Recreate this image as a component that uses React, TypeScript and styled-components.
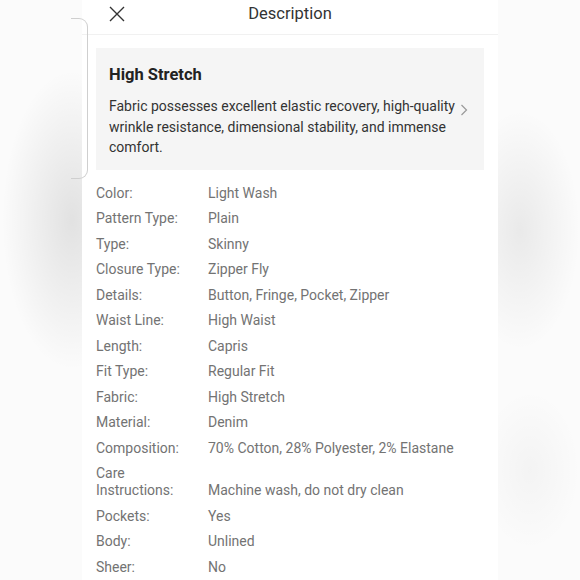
import React from "react";
import styled, { createGlobalStyle } from "styled-components";

const Global = createGlobalStyle`
  html, body { margin: 0; padding: 0; }
  body {
    width: 580px;
    height: 580px;
    overflow: hidden;
    font-family: Roboto, "Noto Sans", "Liberation Sans", sans-serif;
    background: #fbfbfb;
  }
`;

const Stage = styled.div`
  position: relative;
  width: 580px;
  height: 580px;
  overflow: hidden;
  display: flex;
  background:
    radial-gradient(ellipse 70px 150px at 72px 220px, rgba(0,0,0,0.10), rgba(0,0,0,0) 100%),
    radial-gradient(ellipse 60px 120px at 520px 230px, rgba(0,0,0,0.07), rgba(0,0,0,0) 100%),
    radial-gradient(ellipse 50px 80px at 530px 470px, rgba(0,0,0,0.03), rgba(0,0,0,0) 100%),
    #fbfbfb;
`;

const BehindCard = styled.div`
  position: absolute;
  left: 71px;
  top: 18px;
  width: 16px;
  height: 159px;
  border: 1px solid #cfcfcf;
  border-left: none;
  border-radius: 0 9px 9px 0;
  z-index: 2;
`;

const Panel = styled.div`
  margin-left: 82px;
  width: 416px;
  background: #ffffff;
  display: flex;
  flex-direction: column;
`;

const Header = styled.div`
  position: relative;
  height: 35px;
  border-bottom: 1px solid #f1f1f1;
  display: flex;
  align-items: center;
  justify-content: center;
`;

const Close = styled.button`
  position: absolute;
  left: 24px;
  top: 3px;
  width: 22px;
  height: 22px;
  padding: 0;
  border: none;
  background: none;
  display: flex;
  align-items: center;
  justify-content: center;
`;

const Title = styled.h1`
  margin: 0;
  margin-top: -8px;
  font-size: 16.5px;
  font-weight: 400;
  color: #333;
`;

const Card = styled.div`
  margin: 13px 14px 0 14px;
  background: #f5f5f5;
  padding: 17px 13px 14px 13px;
  height: 122px;
  box-sizing: border-box;
`;

const CardTitle = styled.h2`
  margin: 0 0 11px 0;
  font-size: 16.5px;
  font-weight: 700;
  color: #222;
  line-height: 20px;
`;

const CardBody = styled.div`
  display: flex;
  align-items: flex-start;
  gap: 3px;
`;

const CardText = styled.p`
  margin: 0;
  font-size: 14px;
  line-height: 20.5px;
  color: #333;
  width: 348px;
`;

const Chevron = styled.span`
  display: flex;
  margin-top: 8px;
`;

const Specs = styled.div`
  margin: 10.5px 14px 0 14px;
  display: flex;
  flex-direction: column;
`;

const Row = styled.div`
  display: grid;
  grid-template-columns: 112px 1fr;
  align-items: end;
  padding: 4.25px 0;
  font-size: 14px;
  line-height: 17px;
  color: #737373;
`;

const Label = styled.span<{ $narrow?: boolean }>`
  width: ${(p) => (p.$narrow ? "90px" : "auto")};
`;

const Value = styled.span``;

const specs: [string, string][] = [
  ["Color:", "Light Wash"],
  ["Pattern Type:", "Plain"],
  ["Type:", "Skinny"],
  ["Closure Type:", "Zipper Fly"],
  ["Details:", "Button, Fringe, Pocket, Zipper"],
  ["Waist Line:", "High Waist"],
  ["Length:", "Capris"],
  ["Fit Type:", "Regular Fit"],
  ["Fabric:", "High Stretch"],
  ["Material:", "Denim"],
  ["Composition:", "70% Cotton, 28% Polyester, 2% Elastane"],
  ["Care Instructions:", "Machine wash, do not dry clean"],
  ["Pockets:", "Yes"],
  ["Body:", "Unlined"],
  ["Sheer:", "No"],
];

export default function App() {
  return (
    <>
      <Global />
      <Stage>
        <BehindCard />
        <Panel>
          <Header>
            <Close aria-label="close">
              <svg width="16" height="16" viewBox="0 0 16 16">
                <path d="M1 1 L15 15 M15 1 L1 15" stroke="#333" strokeWidth="1.4" fill="none" />
              </svg>
            </Close>
            <Title>Description</Title>
          </Header>
          <Card>
            <CardTitle>High Stretch</CardTitle>
            <CardBody>
              <CardText>
                Fabric possesses excellent elastic recovery, high-quality wrinkle resistance,
                dimensional stability, and immense comfort.
              </CardText>
              <Chevron>
                <svg width="8" height="12" viewBox="0 0 8 12">
                  <path d="M1.5 1 L6.5 6 L1.5 11" stroke="#999" strokeWidth="1.2" fill="none" />
                </svg>
              </Chevron>
            </CardBody>
          </Card>
          <Specs>
            {specs.map(([l, v]) => (
              <Row key={l}>
                <Label $narrow={l === "Care Instructions:"}>{l}</Label>
                <Value>{v}</Value>
              </Row>
            ))}
          </Specs>
        </Panel>
      </Stage>
    </>
  );
}
